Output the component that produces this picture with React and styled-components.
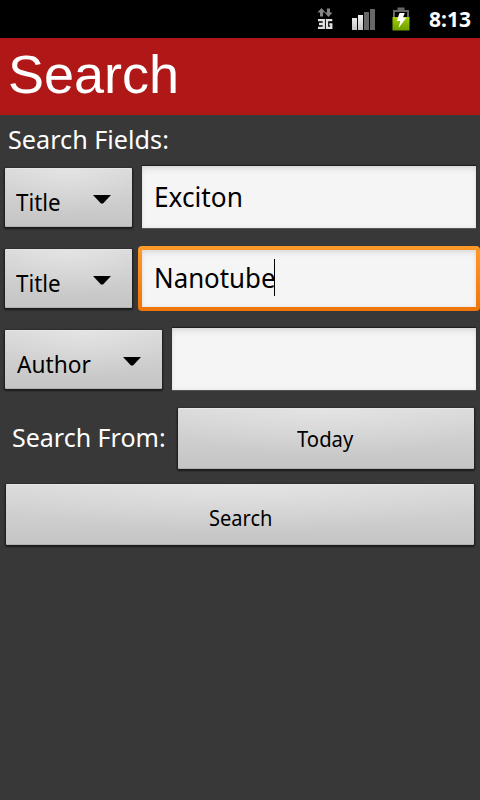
import React from "react";
import styled, { createGlobalStyle } from "styled-components";

const GlobalStyle = createGlobalStyle`
  * { box-sizing: border-box; }
  body { margin: 0; background: #383838; }
`;

const Screen = styled.main`
  display: flex;
  flex-direction: column;
  width: 480px;
  height: 800px;
  overflow: hidden;
  background: #383838;
  font-family: "Noto Sans", "Open Sans", sans-serif;
  color: #fff;
`;

const StatusBar = styled.div`
  display: flex;
  flex: none;
  justify-content: flex-end;
  height: 38px;
  background: #000;
`;

const StatusIcons = styled.svg`
  display: block;
  width: 110px;
  height: 38px;
`;

const Text = styled.span`
  display: inline-block;
  white-space: nowrap;
  font-size: ${(p) => p.$size}px;
  line-height: ${(p) => p.$line || 30}px;
  transform: scaleX(${(p) => p.$stretch || 1});
  transform-origin: ${(p) => p.$origin || "left"} center;
`;

const Clock = styled(Text)`
  width: 51px;
  margin-left: 11px;
  padding-top: 4px;
  font-weight: 700;
`;

const TitleBar = styled.header`
  flex: none;
  height: 77px;
  padding: 5px 0 0 8px;
  background: #b01818;
`;

const Heading = styled.h1`
  margin: 0;
  font: 400 54px/62px "Liberation Sans", Arial, sans-serif;
`;

const SectionLabel = styled.div`
  flex: none;
  height: 51px;
  padding: 9px 0 0 8px;
`;

const FieldRow = styled.div`
  display: flex;
  flex: none;
  align-items: flex-start;
  height: ${(p) => p.$height || 81}px;
  padding-left: 5px;
`;

const Button = styled.button`
  display: flex;
  flex: none;
  align-items: flex-start;
  justify-content: center;
  width: ${(p) => p.$width}px;
  height: 61px;
  padding: ${(p) => p.$top}px 2px 0 0;
  border: 0;
  border-radius: 1px;
  background:
    radial-gradient(ellipse 60% 80% at 50% 0, rgba(255, 255, 255, 0.28), transparent),
    linear-gradient(#dadada, #c4c4c4);
  box-shadow: inset 0 1px #e6e6e6, inset 0 -1px #b0b0b0, 0 1px 2px 1px rgba(0, 0, 0, 0.55);
  font-family: inherit;
  color: #000;
`;

const Spinner = styled(Button)`
  justify-content: space-between;
  height: 59px;
  margin-top: 2px;
  padding: 19px 20px 0 ${(p) => p.$inset}px;
`;

const Arrow = styled.svg`
  width: 20px;
  height: 10px;
  margin-top: 8px;
`;

const Field = styled.div`
  display: flex;
  flex: none;
  align-items: flex-start;
  width: ${(p) => p.$width}px;
  height: 62px;
  margin-left: 10px;
  padding: 13px 0 0 12px;
  background: #f5f5f5;
  box-shadow: inset 0 6px 6px -3px rgba(0, 0, 0, 0.09), inset 0 0 4px rgba(0, 0, 0, 0.08),
    0 -1px 1px #202020, 0 1px #555;
  color: #000;
`;

const FocusRing = styled.div`
  flex: none;
  width: 342px;
  height: 65px;
  margin: -1px 0 0 6px;
  padding: 4px;
  border-radius: 4px;
  background: linear-gradient(#ff9a29, #ef7508);
`;

const FocusedField = styled(Field)`
  height: 57px;
  margin: 0;
  padding-top: 10px;
  box-shadow: inset 0 6px 6px -3px rgba(0, 0, 0, 0.08), inset 0 0 4px rgba(0, 0, 0, 0.08);
`;

const Caret = styled.span`
  width: 1px;
  height: 37px;
  margin: -1px 0 0 -7px;
  background: #000;
`;

const DateRow = styled.div`
  display: flex;
  flex: none;
  height: 76px;
  padding-left: 12px;
`;

const DateLabel = styled.div`
  width: 166px;
  padding-top: 14px;
`;

const SubmitRow = styled.div`
  padding-left: 6px;
`;

function FieldPicker({ width, stretch, inset = 11, children }) {
  return (
    <Spinner $width={width} $inset={inset}>
      <Text $size={24} $stretch={stretch}>{children}</Text>
      <Arrow viewBox="0 0 20 10">
        <path d="M1 0h18l-8 8.5h-2z" fill="#000" />
      </Arrow>
    </Spinner>
  );
}

function Icons() {
  return (
    <StatusIcons viewBox="308 0 110 38">
      <defs>
        <linearGradient id="signal" x1="0" y1="0" x2="0" y2="1">
          <stop offset="0" stopColor="#f4f4f4" />
          <stop offset="1" stopColor="#c2c2c2" />
        </linearGradient>
        <linearGradient id="charge" x1="0" y1="0" x2="0" y2="1">
          <stop offset="0" stopColor="#a0d000" />
          <stop offset="1" stopColor="#6f9d00" />
        </linearGradient>
      </defs>
      <path d="M321.500 8l4 4.500h-2.500v4h-3v-4h-2.500zM328.500 17l-4-4.500h2.500v-4h3v4h2.500z" fill="#858585" />
      <path
        d="M318 20.200h5.800v7.600H318M319 24h4.500M332.300 20.200h-5.300v7.600h4.300v-3.500h-2"
        fill="none"
        stroke="#e2e2e2"
        strokeWidth="2.300"
      />
      <path d="M352 18h5v12h-5zM358 15h5v15h-5z" fill="url(#signal)" />
      <path d="M364 12h5v18h-5zM370 9h5v21h-5z" fill="#686868" />
      <path d="M394 17v-6h14v6" fill="none" stroke="#666" strokeWidth="2" />
      <path d="M397.500 7.500h7v3h-7z" fill="#666" />
      <path d="M392.500 17h17v13.500h-17z" fill="url(#charge)" />
      <path d="M399.500 13h5.300l-1.800 4.500h3.500l-8 10.500 1.800-7h-3.500z" fill="#fff" />
    </StatusIcons>
  );
}

export default function App() {
  return (
    <>
      <GlobalStyle />
      <Screen>
        <StatusBar>
          <Icons />
          <Clock $size={21}>8:13</Clock>
        </StatusBar>
        <TitleBar>
          <Heading>Search</Heading>
        </TitleBar>
        <SectionLabel>
          <Text $size={25.5} $stretch={0.988}>Search Fields:</Text>
        </SectionLabel>
        <FieldRow>
          <FieldPicker width={127} stretch={0.93}>Title</FieldPicker>
          <Field $width={334}>
            <Text $size={27} $line={36} $stretch={0.972}>Exciton</Text>
          </Field>
        </FieldRow>
        <FieldRow>
          <FieldPicker width={127} stretch={0.93}>Title</FieldPicker>
          <FocusRing>
            <FocusedField $width={334}>
              <Text $size={27} $line={36} $stretch={0.957}>Nanotube</Text>
              <Caret />
            </FocusedField>
          </FocusRing>
        </FieldRow>
        <FieldRow $height={80}>
          <FieldPicker width={157} stretch={0.945} inset={12}>Author</FieldPicker>
          <Field $width={304} />
        </FieldRow>
        <DateRow>
          <DateLabel>
            <Text $size={25.3} $stretch={0.988}>Search From:</Text>
          </DateLabel>
          <Button $width={296} $top={16}>
            <Text $size={21} $stretch={0.965} $origin="center">Today</Text>
          </Button>
        </DateRow>
        <SubmitRow>
          <Button $width={468} $top={19}>
            <Text $size={21} $stretch={0.955} $origin="right">Search</Text>
          </Button>
        </SubmitRow>
      </Screen>
    </>
  );
}
